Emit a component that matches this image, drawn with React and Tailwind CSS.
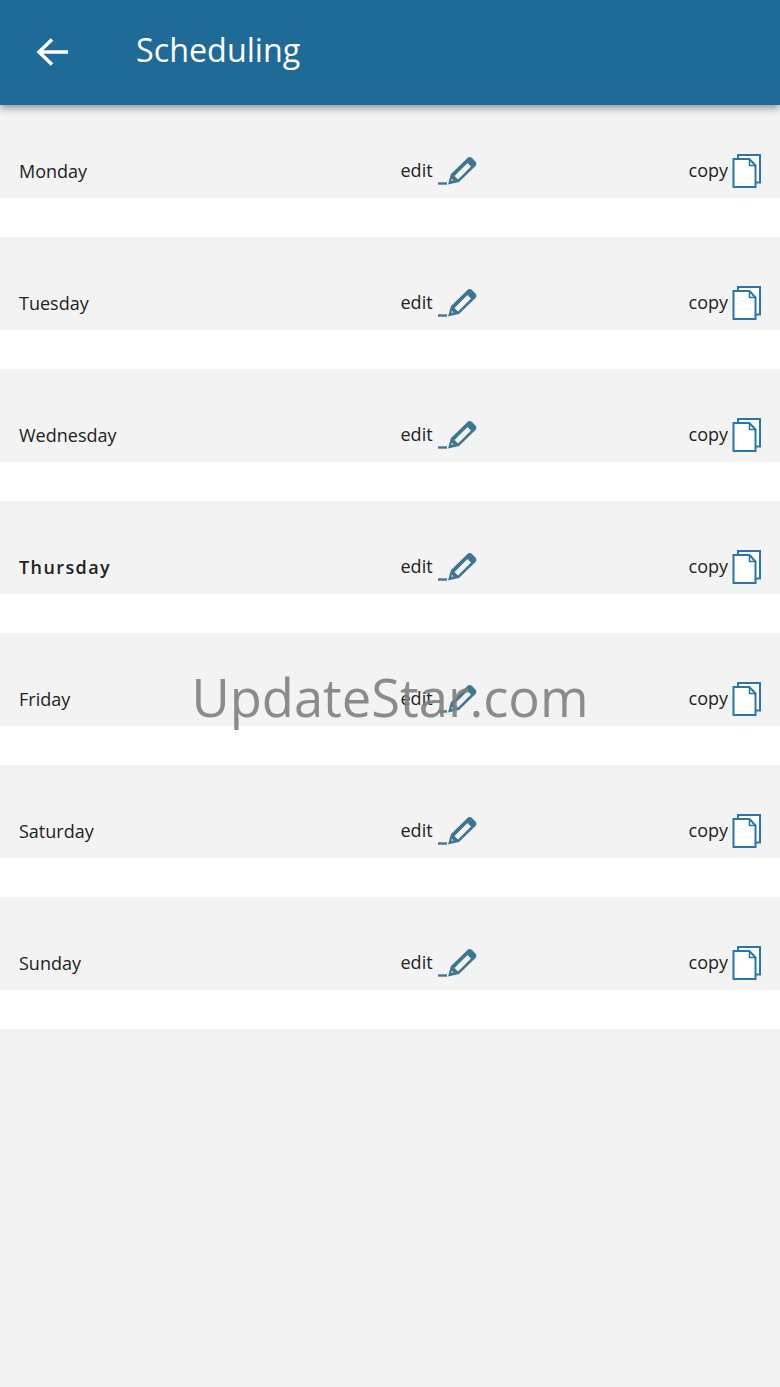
const days = ["Monday", "Tuesday", "Wednesday", "Thursday", "Friday", "Saturday", "Sunday"];

function PencilIcon() {
  return (
    <svg width="40" height="32" viewBox="0 0 40 32" className="block">
      <path d="M0 28.500h9" stroke="#3f7590" strokeWidth="2.400" fill="none" />
      <path
        fillRule="evenodd"
        fill="#3f7590"
        d="M10 29.500 13 19 29 3.500Q31.500 1 34 3L37.500 6.500Q39.500 9 37 11.500L21 27ZM16.500 21l3.500 3.500L33 11.500 29.500 8ZM13.200 25.800l2.300-.4-1.600-1.700Z"
      />
    </svg>
  );
}

function CopyIcon() {
  return (
    <svg width="30" height="35" viewBox="0 0 30 35" className="block">
      <path d="M6 1h22v27.500H6z" fill="#ffffff" stroke="#2a77a3" strokeWidth="2" />
      <path d="M1.500 5h16l6 6.500V33H1.500z" fill="#ffffff" stroke="#2a77a3" strokeWidth="2" />
      <path d="M17.500 5v6.500h6" fill="none" stroke="#2a77a3" strokeWidth="1.600" />
    </svg>
  );
}

function DayRow({ name }) {
  const bold = name === "Thursday";
  return (
    <div className="h-[132px] bg-white">
      <div className="h-[93px] bg-[#f3f3f3] flex items-end pl-[19px] pr-[18px] pb-[9px] text-[18px] leading-[36px] text-[#222]">
        <span className={bold ? "flex-1 font-semibold tracking-[1.4px]" : "flex-1"}>{name}</span>
        <div className="w-[288px] flex items-center gap-[5px]">
          <span className="relative -top-[1px]">edit</span>
          <PencilIcon />
        </div>
        <div className="flex items-center gap-[4px]">
          <span className="relative -top-[1px]">copy</span>
          <CopyIcon />
        </div>
      </div>
    </div>
  );
}

export default function App() {
  return (
    <div className="relative w-[780px] h-[1387px] bg-[#f3f3f3] overflow-hidden font-['Open_Sans',sans-serif]">
      <header className="relative z-10 h-[105px] bg-[#1f6a96] shadow-[0_3px_8px_rgba(0,0,0,0.4)] flex items-center pl-[36px] pb-[3px] text-white">
        <svg width="34" height="30" viewBox="0 0 34 30" className="block mt-[2px]">
          <path d="M32 15H4M16 2.500 3 15l13 12.500" fill="none" stroke="#ffffff" strokeWidth="3.500" />
        </svg>
        <h1 className="ml-[66px] mb-[4px] text-[32.300px] leading-[40px]">Scheduling</h1>
      </header>
      <main>
        {days.map((d) => (
          <DayRow key={d} name={d} />
        ))}
      </main>
      <div className="absolute left-0 right-0 top-[660px] text-center text-[52.500px] leading-[74px] text-[#7f7f7f]/90">
        UpdateStar.com
      </div>
    </div>
  );
}
